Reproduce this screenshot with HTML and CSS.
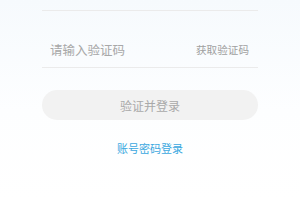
FILE: index.html
```html
<html>
<head>
	<title>Login</title>
	<link rel="stylesheet" href="styles.css">
</head>
<body>
<div class="panel">
	<div class="field first"></div>
	<div class="field">
		<span class="placeholder">请输入验证码</span>
		<span class="getCode">获取验证码</span>
	</div>
	<div class="submit">验证并登录</div>
	<div class="switch">账号密码登录</div>
</div>
</body>
</html>
```

FILE: styles.css
```css
body {
	margin: 0;
	height: 200px;
	background: linear-gradient(#f6fafd, #fdfeff 110px, #ffffff);
	font-family: "Noto Sans CJK SC", "Noto Sans", sans-serif;
}
.panel {
	width: 216px;
	margin: 0 auto;
	display: flex;
	flex-direction: column;
}
.field {
	height: 57px;
	border-bottom: 1px solid #ebebeb;
	display: flex;
	align-items: center;
	justify-content: space-between;
	padding: 20px 9px 0 8px;
	box-sizing: border-box;
}
.field.first {
	height: 11px;
	padding: 0;
}
.placeholder {
	font-size: 12.5px;
	color: #a8a8a8;
}
.getCode {
	font-size: 10.6px;
	color: #a0a0a0;
}
.submit {
	margin-top: 22px;
	height: 30px;
	border-radius: 15px;
	background: #f2f2f2;
	color: #a9a9a9;
	font-size: 12px;
	display: flex;
	align-items: center;
	justify-content: center;
}
.switch {
	margin-top: 20px;
	text-align: center;
	font-size: 11px;
	color: #3ba8e0;
}
```
